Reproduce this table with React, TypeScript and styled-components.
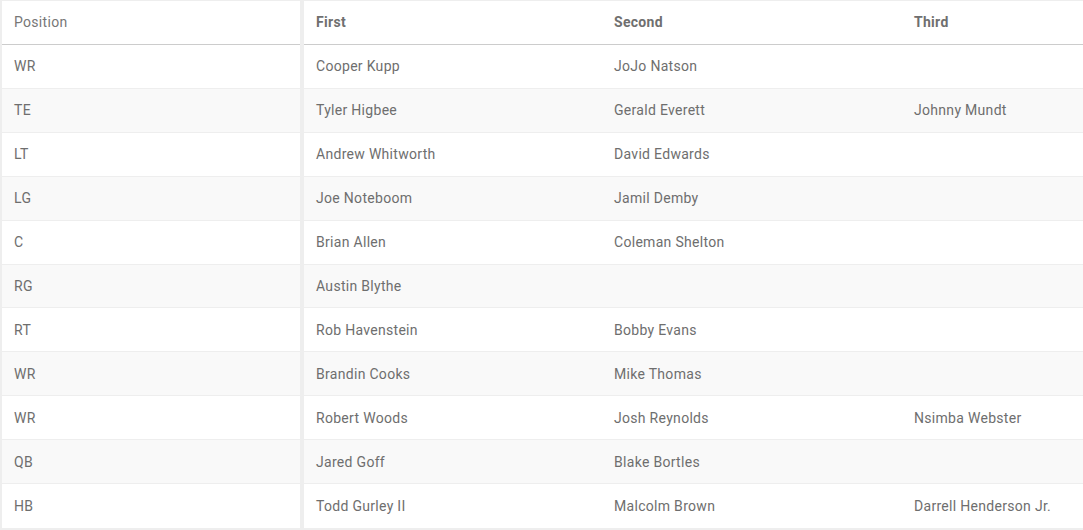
import React from 'react';
import styled, { createGlobalStyle } from 'styled-components';

const GlobalStyle = createGlobalStyle`
  html, body {
    margin: 0;
    padding: 0;
    background: #fff;
  }
  body {
    font-family: Roboto, "Open Sans", Arial, sans-serif;
  }
`;

const Wrapper = styled.div`
  display: flex;
  width: 1083px;
  height: 530px;
  box-sizing: border-box;
  border-top: 1px solid #eee;
  border-left: 2px solid #eee;
  border-bottom: 2px solid #eee;
  overflow: hidden;
`;

const Panel = styled.div<{ $width?: number }>`
  flex: ${(p) => (p.$width ? `0 0 ${p.$width}px` : '1 1 auto')};
  min-width: 0;
  display: flex;
  flex-direction: column;
`;

const Divider = styled.div`
  flex: 0 0 4px;
  background: #eee;
`;

const Row = styled.div<{ $cols: string; $striped?: boolean; $head?: boolean }>`
  display: grid;
  grid-template-columns: ${(p) => p.$cols};
  height: 44px;
  box-sizing: border-box;
  align-items: center;
  background: ${(p) => (p.$striped ? '#f9f9f9' : '#fff')};
  border-bottom: 1px solid ${(p) => (p.$head ? '#ccc' : '#eee')};
  &:last-child {
    border-bottom: none;
  }
`;

const HeadCell = styled.div<{ $bold?: boolean }>`
  padding: 0 12px;
  font-size: 14px;
  letter-spacing: 0.3px;
  color: ${(p) => (p.$bold ? '#6f6f6f' : '#777')};
  font-weight: ${(p) => (p.$bold ? 700 : 400)};
  white-space: nowrap;
`;

const Cell = styled.div`
  padding: 0 12px;
  font-size: 14px;
  letter-spacing: 0.3px;
  color: #6e6e6e;
  white-space: nowrap;
`;

const depth: [string, string, string, string][] = [
  ['WR', 'Cooper Kupp', 'JoJo Natson', ''],
  ['TE', 'Tyler Higbee', 'Gerald Everett', 'Johnny Mundt'],
  ['LT', 'Andrew Whitworth', 'David Edwards', ''],
  ['LG', 'Joe Noteboom', 'Jamil Demby', ''],
  ['C', 'Brian Allen', 'Coleman Shelton', ''],
  ['RG', 'Austin Blythe', '', ''],
  ['RT', 'Rob Havenstein', 'Bobby Evans', ''],
  ['WR', 'Brandin Cooks', 'Mike Thomas', ''],
  ['WR', 'Robert Woods', 'Josh Reynolds', 'Nsimba Webster'],
  ['QB', 'Jared Goff', 'Blake Bortles', ''],
  ['HB', 'Todd Gurley II', 'Malcolm Brown', 'Darrell Henderson Jr.'],
];

const rightCols = '298px 300px 300px';

export default function App() {
  return (
    <>
      <GlobalStyle />
      <Wrapper>
        <Panel $width={298}>
          <Row $cols="1fr" $head>
            <HeadCell>Position</HeadCell>
          </Row>
          {depth.map((r, i) => (
            <Row key={i} $cols="1fr" $striped={i % 2 === 1}>
              <Cell>{r[0]}</Cell>
            </Row>
          ))}
        </Panel>
        <Divider />
        <Panel>
          <Row $cols={rightCols} $head>
            <HeadCell $bold>First</HeadCell>
            <HeadCell $bold>Second</HeadCell>
            <HeadCell $bold>Third</HeadCell>
          </Row>
          {depth.map((r, i) => (
            <Row key={i} $cols={rightCols} $striped={i % 2 === 1}>
              <Cell>{r[1]}</Cell>
              <Cell>{r[2]}</Cell>
              <Cell>{r[3]}</Cell>
            </Row>
          ))}
        </Panel>
      </Wrapper>
    </>
  );
}
